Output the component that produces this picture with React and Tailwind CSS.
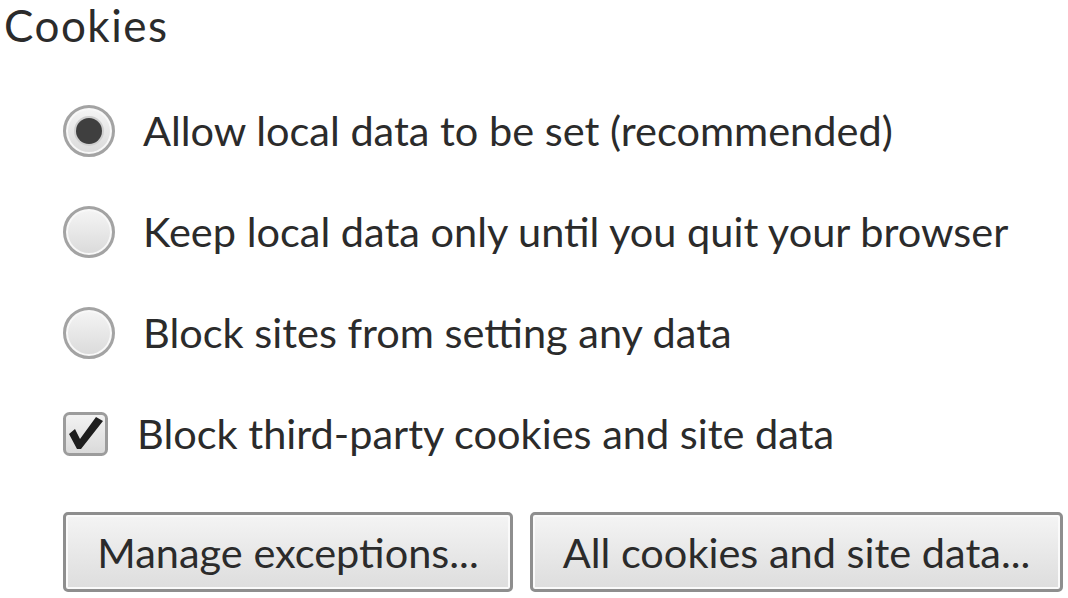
import React from 'react';

// Radio button drawn like the old Chrome settings control
const Radio = ({ checked }) => (
  <div className="w-[52px] h-[52px] shrink-0 rounded-full border-[3px] border-[#a3a3a3] bg-gradient-to-b from-[#f5f5f5] to-[#dadada] shadow-[inset_0_0_0_2px_#f8f8f8] flex items-center justify-center">
    {checked && <div className="w-[26px] h-[26px] rounded-full bg-[#3f3f3f] shadow-[0_0_0_2px_#cfcfcf]"></div>}
  </div>
);

const Checkbox = () => (
  <svg width="46" height="44" viewBox="0 0 46 44" className="shrink-0">
    <defs>
      <linearGradient id="cb" x1="0" y1="0" x2="0" y2="1">
        <stop offset="0" stopColor="#f3f3f3" />
        <stop offset="1" stopColor="#d9d9d9" />
      </linearGradient>
    </defs>
    <rect x="1.5" y="1.5" width="42" height="41" rx="5" fill="url(#cb)" stroke="#9c9c9c" strokeWidth="3" />
    <path d="M6 22 L12 17 L17 27 L33 5 L40 9 L18 37 L14 37 Z" fill="#1e1e1e" />
  </svg>
);

const Option = ({ checked, children }) => (
  <div className="h-[101px] flex items-center">
    <Radio checked={checked} />
    <span className="ml-[28px]">{children}</span>
  </div>
);

const Button = ({ width, children }) => (
  <button className={`${width} h-[80px] rounded-[5px] border-[3px] border-[#8e8e8e] bg-gradient-to-b from-[#f4f4f4] to-[#dddddd] shadow-[inset_0_0_0_2px_#fafafa] text-[#2b2b2b] flex items-center justify-center`}>
    {children}
  </button>
);

export default function App() {
  return (
    <div className="w-[1068px] h-[598px] bg-white overflow-hidden text-[#2b2b2b] text-[41.5px] font-['Lato',sans-serif]">
      <div className="pl-[4px] pt-[2px] h-[48px] leading-[46px] text-[44px] tracking-[1.5px]">Cookies</div>
      <div className="pl-[63px] mt-[32px]">
        <Option checked>Allow local data to be set (recommended)</Option>
        <Option>Keep local data only until you quit your browser</Option>
        <Option>Block sites from setting any data</Option>
        <div className="h-[101px] flex items-center">
          <Checkbox />
          <span className="ml-[28px]">Block third-party cookies and site data</span>
        </div>
        <div className="mt-[28px] flex gap-[17px]">
          <Button width="w-[450px]">Manage exceptions...</Button>
          <Button width="w-[533px]">All cookies and site data...</Button>
        </div>
      </div>
    </div>
  );
}
